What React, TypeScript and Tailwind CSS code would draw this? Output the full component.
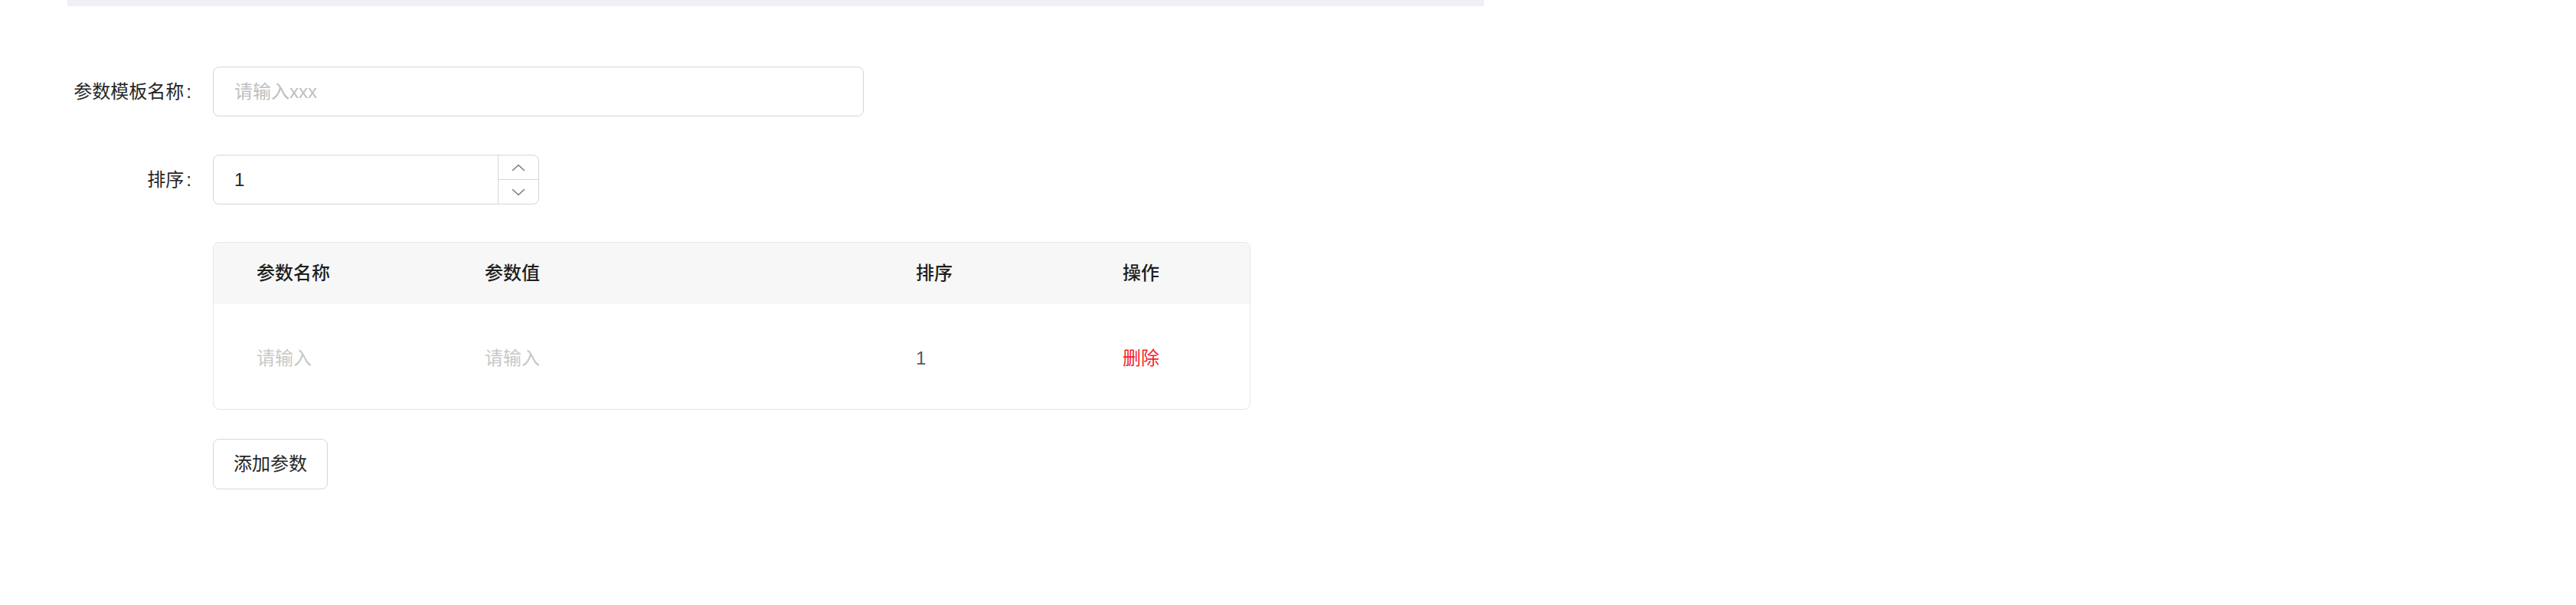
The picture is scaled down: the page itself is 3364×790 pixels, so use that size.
import { useState } from 'react';

function Chevron({ up }: { up?: boolean }) {
  return (
    <svg width="18" height="10" viewBox="0 0 18 10" fill="none" className="text-[#7a7a7a]">
      <polyline
        points={up ? '1.5,8.5 9,1.5 16.5,8.5' : '1.5,1.5 9,8.5 16.5,1.5'}
        stroke="currentColor"
        strokeWidth="1.5"
        strokeLinecap="round"
        strokeLinejoin="round"
      />
    </svg>
  );
}

export default function App() {
  const [sort, setSort] = useState('1');

  return (
    <div className="min-h-screen bg-white font-[family-name:'Liberation_Sans','Noto_Sans_CJK_SC',sans-serif] text-[#262626]">
      <div className="ml-[88px] h-[8px] w-[1850px] bg-[#eff0f5]" />

      <div className="flex flex-col pt-[79px]">
        <div className="flex items-center">
          <label className="w-[278px] pr-[28px] text-right text-[24px]">
            参数模板名称<span className="ml-[3px]">:</span>
          </label>
          <input
            className="h-[65px] w-[850px] rounded-[8px] border border-[#d6d6d6] px-[27px] text-[24px] outline-none placeholder:text-[#bfbfbf]"
            placeholder="请输入xxx"
          />
        </div>

        <div className="mt-[50px] flex items-center">
          <label className="w-[278px] pr-[28px] text-right text-[24px]">
            排序<span className="ml-[3px]">:</span>
          </label>
          <div className="flex h-[65px] w-[426px] overflow-hidden rounded-[8px] border border-[#d6d6d6]">
            <input
              className="min-w-0 flex-1 px-[27px] text-[24px] outline-none"
              value={sort}
              onChange={(e) => setSort(e.target.value)}
            />
            <div className="flex w-[53px] flex-col border-l border-[#d6d6d6]">
              <button className="flex flex-1 items-center justify-center border-b border-[#d6d6d6]">
                <Chevron up />
              </button>
              <button className="flex flex-1 items-center justify-center">
                <Chevron />
              </button>
            </div>
          </div>
        </div>

        <div className="ml-[278px] mt-[49px] w-[1355px] overflow-hidden rounded-[8px] border border-[#e6e6e6]">
          <div className="grid h-[80px] grid-cols-[298px_563px_270px_1fr] items-center bg-[#f7f7f7] text-[24px] font-medium text-[#1f1f1f]">
            <div className="pl-[56px]">参数名称</div>
            <div className="pl-[56px]">参数值</div>
            <div className="pl-[56px]">排序</div>
            <div className="pl-[56px]">操作</div>
          </div>
          <div className="grid h-[137px] grid-cols-[298px_563px_270px_1fr] items-center pt-[5px] text-[24px]">
            <div className="pl-[56px]">
              <input className="w-[200px] outline-none placeholder:text-[#c8c8c8]" placeholder="请输入" />
            </div>
            <div className="pl-[56px]">
              <input className="w-[400px] outline-none placeholder:text-[#c8c8c8]" placeholder="请输入" />
            </div>
            <div className="pl-[56px] text-[#595959]">1</div>
            <div className="pl-[56px]">
              <button className="text-[#f5222d]">删除</button>
            </div>
          </div>
        </div>

        <div className="ml-[278px] mt-[38px]">
          <button className="h-[66px] w-[150px] rounded-[8px] border border-[#d6d6d6] bg-white text-[24px] text-[#262626]">
            添加参数
          </button>
        </div>
      </div>
    </div>
  );
}
